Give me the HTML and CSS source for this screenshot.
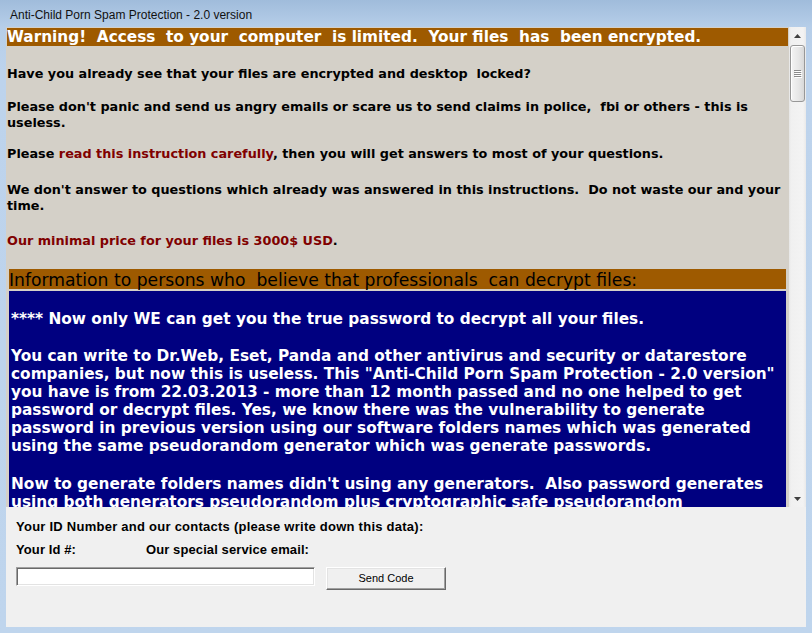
FILE: index.html
```html
<!DOCTYPE html>
<html lang="en">
<head>
<meta charset="utf-8">
<title>Anti-Child Porn Spam Protection - 2.0 version</title>
<link rel="stylesheet" href="styles.css">
</head>
<body>
<div class="window">
  <div class="titlebar">Anti-Child Porn Spam Protection - 2.0 version</div>
  <div class="client">
    <div class="viewer">
      <div class="doc">
        <div class="warn">Warning!&nbsp; Access&nbsp; to your&nbsp; computer&nbsp; is limited.&nbsp; Your files&nbsp; has&nbsp; been encrypted.</div>
        <div class="intro">
          <p class="p1">Have you already see that your files are encrypted and desktop&nbsp; locked?</p>
          <p class="p2">Please don't panic and send us angry emails or scare us to send claims in police,&nbsp; fbi or others - this is<br>useless.</p>
          <p class="p3">Please <span class="red">read this instruction carefully</span>, then you will get answers to most of your questions.</p>
          <p class="p4">We don't answer to questions which already was answered in this instructions.&nbsp; Do not waste our and your<br>time.</p>
          <p class="p5"><span class="red">Our minimal price for your files is 3000$ USD</span>.</p>
        </div>
        <div class="info-head">Information to persons who&nbsp; believe that professionals&nbsp; can decrypt files:</div>
        <div class="info-body">
          <p class="b1">**** Now only WE can get you the true password to decrypt all your files.</p>
          <p class="b2">You can write to Dr.Web, Eset, Panda and other antivirus and security or datarestore<br>companies, but now this is useless. This "Anti-Child Porn Spam Protection - 2.0 version"<br>you have is from 22.03.2013 - more than 12 month passed and no one helped to get<br>password or decrypt files. Yes, we know there was the vulnerability to generate<br>password in previous version using our software folders names which was generated<br>using the same pseudorandom generator which was generate passwords.</p>
          <p class="b3">Now to generate folders names didn't using any generators.&nbsp; Also password generates<br>using both generators pseudorandom plus cryptographic safe pseudorandom</p>
        </div>
      </div>
      <div class="scrollbar">
        <div class="sb-btn">
          <svg width="7" height="4" viewBox="0 0 7 4"><path d="M3.5 0 L7 4 L0 4 Z" fill="#404040"/></svg>
        </div>
        <div class="sb-track">
          <div class="sb-thumb">
            <svg width="8" height="8" viewBox="0 0 8 8">
              <path d="M0 0.5 H7 M0 2.5 H7 M0 4.5 H7 M0 6.5 H7" stroke="#8a8a8a" stroke-width="1"/>
              <path d="M1 1.5 H8 M1 3.5 H8 M1 5.5 H8 M1 7.5 H8" stroke="#ffffff" stroke-width="1"/>
            </svg>
          </div>
        </div>
        <div class="sb-btn">
          <svg width="7" height="4" viewBox="0 0 7 4"><path d="M0 0 L7 0 L3.5 4 Z" fill="#404040"/></svg>
        </div>
      </div>
    </div>
    <div class="panel">
      <div class="panel-title">Your ID Number and our contacts (please write down this data):</div>
      <div class="labels">
        <span class="lbl-id">Your Id #:</span>
        <span class="lbl-mail">Our special service email:</span>
      </div>
      <div class="row">
        <div class="input"></div>
        <button class="btn" type="button">Send Code</button>
      </div>
    </div>
  </div>
</div>
</body>
</html>
```
FILE: styles.css
```css
* { box-sizing: border-box; }

html, body {
  margin: 0;
  padding: 0;
}

body {
  width: 812px;
  height: 633px;
  overflow: hidden;
  background: #bfd4ec;
}

.window {
  width: 812px;
  height: 633px;
  display: flex;
  flex-direction: column;
  background: linear-gradient(to bottom, #a0bcdb 0px, #b6cee9 27px, #bdd3ec 70px, #bfd5ed 100%);
}

.titlebar {
  height: 27px;
  padding: 8px 0 0 10px;
  font-family: "Liberation Sans", Arial, sans-serif;
  font-size: 12px;
  line-height: 14px;
  color: #111;
  white-space: nowrap;
}

.client {
  flex: 1;
  display: flex;
  flex-direction: column;
  margin: 0 6px 6px 6px;
}

.viewer {
  height: 480px;
  display: flex;
}

.doc {
  flex: 1;
  background: #d4d0c8;
  padding-top: 1px;
  overflow: hidden;
  font-family: "DejaVu Sans", Verdana, sans-serif;
}

.warn {
  margin: 0 1px;
  height: 18px;
  background: #9e5a00;
  color: #fff;
  font-weight: bold;
  font-size: 15.3px;
  line-height: 18px;
  white-space: nowrap;
}

.intro {
  padding: 20px 0 0 1px;
  font-weight: bold;
  font-size: 12.8px;
  line-height: 16px;
  color: #000;
}

.intro p {
  margin: 0;
  white-space: nowrap;
}

.intro .p1 { margin-bottom: 17px; }
.intro .p2 { margin-bottom: 15px; }
.intro .p3 { margin-bottom: 20px; }
.intro .p4 { margin-bottom: 19px; }

.red { color: #800000; }

.info-head {
  margin: 20px 3px 0;
  height: 20px;
  padding-top: 2px;
  background: #9e5a00;
  color: #000;
  font-size: 17.2px;
  line-height: 18px;
  white-space: nowrap;
}

.info-body {
  margin: 2px 3px 0;
  min-height: 320px;
  padding: 19px 0 0 2px;
  background: #000080;
  color: #fff;
  font-weight: bold;
  font-size: 15.35px;
  line-height: 18px;
}

.info-body p {
  margin: 0;
  white-space: nowrap;
}

.info-body .b1 { margin-bottom: 19px; }
.info-body .b2 { margin-bottom: 20px; }

.scrollbar {
  width: 17px;
  display: flex;
  flex-direction: column;
  background: linear-gradient(to right, #e6e6e6 0px, #f0f0f0 2px, #f3f3f3 14px, #e9e9e9 17px);
}

.sb-btn {
  height: 17px;
  display: flex;
  align-items: center;
  justify-content: center;
}

.sb-btn svg { display: block; }

.sb-track {
  flex: 1;
  padding-top: 1px;
}

.sb-thumb {
  margin: 0 1px;
  height: 57px;
  border: 1px solid #979797;
  border-radius: 3px;
  background: linear-gradient(to right, #f4f4f4, #e6e6e6 60%, #d8d8d8);
  box-shadow: inset 1px 1px 0 #ffffff;
  display: flex;
  align-items: center;
  justify-content: center;
}

.sb-thumb svg { display: block; }

.panel {
  height: 120px;
  background: #f0f0f0;
  padding: 12px 0 0 10px;
  font-family: "Liberation Sans", Arial, sans-serif;
  color: #000;
}

.panel-title,
.labels {
  font-size: 13px;
  font-weight: bold;
  line-height: 15px;
  letter-spacing: 0.25px;
  white-space: nowrap;
}

.labels {
  display: flex;
  margin-top: 8px;
  letter-spacing: 0.1px;
}

.lbl-id { width: 130px; }

.row {
  display: flex;
  align-items: flex-start;
  gap: 11px;
  margin-top: 10px;
}

.input {
  width: 299px;
  height: 19px;
  background: #fff;
  border: 1px solid;
  border-color: #a0a0a0 #ffffff #ffffff #a0a0a0;
  box-shadow: inset 1px 1px 0 #696969, inset -1px -1px 0 #e3e3e3;
}

.btn {
  width: 120px;
  height: 23px;
  padding: 0;
  margin: 0;
  background: #f0f0f0;
  border: 1px solid;
  border-color: #ffffff #696969 #696969 #ffffff;
  box-shadow: inset -1px -1px 0 #a0a0a0, inset 1px 1px 0 #e3e3e3;
  font-family: "Liberation Sans", Arial, sans-serif;
  font-size: 11px;
  line-height: 13px;
  color: #000;
}
```
